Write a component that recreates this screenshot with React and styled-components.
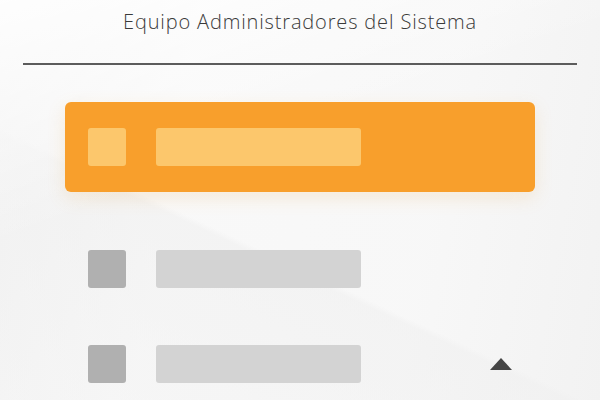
import React from 'react';
import styled, { createGlobalStyle } from 'styled-components';

const GlobalStyle = createGlobalStyle`
  html, body {
    margin: 0;
    padding: 0;
    height: 100%;
  }
  body {
    font-family: 'Open Sans', 'Liberation Sans', sans-serif;
    background: #f4f4f4;
  }
  #root {
    height: 100%;
  }
`;

const Page = styled.div`
  position: relative;
  width: 600px;
  height: 400px;
  overflow: hidden;
  background:
    linear-gradient(160deg, rgba(255, 255, 255, 0.9) 0%, rgba(255, 255, 255, 0) 40%),
    linear-gradient(205deg, rgba(255, 255, 255, 0) 60%, rgba(240, 240, 240, 0.6) 61%, rgba(244, 244, 244, 0.4) 100%),
    linear-gradient(100deg, rgba(238, 238, 238, 0.6) 0%, rgba(252, 252, 252, 0.3) 30%, rgba(248, 248, 248, 0.5) 70%, rgba(240, 240, 240, 0.7) 100%),
    #f7f7f7;
`;

const Header = styled.header`
  padding: 8px 23px 0 23px;
`;

const Title = styled.h1`
  margin: 0;
  height: 28px;
  text-align: center;
  font-size: 20px;
  line-height: 27px;
  font-weight: 300;
  color: #3a3a3a;
  letter-spacing: 0.85px;
`;

const Divider = styled.hr`
  margin: 27px 0 0 0;
  border: none;
  height: 2px;
  background: #5c5c5c;
`;

const List = styled.ul`
  list-style: none;
  margin: 0;
  padding: 37px 65px 0 65px;
`;

const Item = styled.li`
  display: flex;
  align-items: center;
  gap: 30px;
  height: 90px;
  padding: 0 23px;
  margin-bottom: ${(p) => (p.$active ? '32px' : '5px')};
  border-radius: 6px;
  background: ${(p) => (p.$active ? '#f89f2c' : 'transparent')};
  box-shadow: ${(p) => (p.$active ? '0 6px 18px rgba(240, 170, 80, 0.18)' : 'none')};
`;

const Icon = styled.span`
  width: 38px;
  height: 38px;
  border-radius: 3px;
  flex-shrink: 0;
  background: ${(p) => (p.$active ? '#fcc76c' : '#b0b0b0')};
`;

const Label = styled.span`
  width: 205px;
  height: 38px;
  border-radius: 3px;
  background: ${(p) => (p.$active ? '#fcc76c' : '#d3d3d3')};
`;

const ScrollTop = styled.button`
  position: absolute;
  left: 489px;
  top: 357px;
  width: 24px;
  height: 14px;
  padding: 0;
  border: none;
  background: transparent;
  cursor: pointer;
  display: flex;
`;

const items = [
  { id: 1, active: true },
  { id: 2, active: false },
  { id: 3, active: false },
];

export default function App() {
  return (
    <Page>
      <GlobalStyle />
      <Header>
        <Title>Equipo Administradores del Sistema</Title>
        <Divider />
      </Header>
      <List>
        {items.map((item) => (
          <Item key={item.id} $active={item.active}>
            <Icon $active={item.active} />
            <Label $active={item.active} />
          </Item>
        ))}
      </List>
      <ScrollTop aria-label="Volver arriba">
        <svg width="24" height="14" viewBox="0 0 24 14">
          <polygon points="12,1 23,13 1,13" fill="#454545" />
        </svg>
      </ScrollTop>
    </Page>
  );
}
